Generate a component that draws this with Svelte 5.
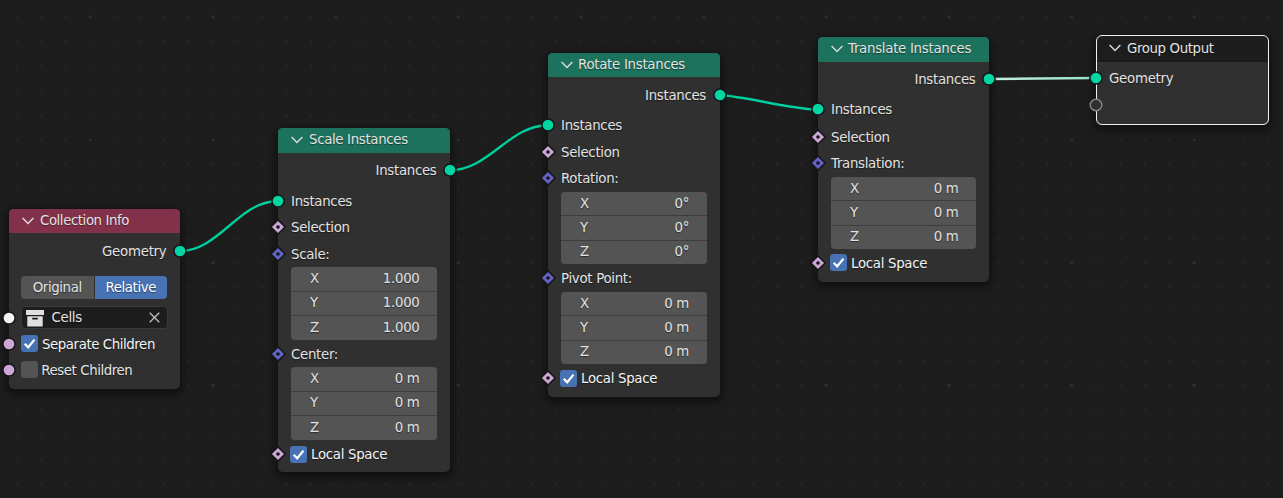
<script>
  const xyz = (a, b = a, c = a) => [['X', a], ['Y', b], ['Z', c]];

  const nodes = [
    {
      title: 'Collection Info', kind: 'input', x: 9, y: 209, w: 171, h: 180, head: 24, tx: 31, ts: -0.43,
      rows: [
        { type: 'out', text: 'Geometry', gap: 5, ls: -0.25 },
        { type: 'toggle', options: ['Original', 'Relative'], gap: 11.5 },
        { type: 'picker', text: 'Cells', gap: 6.5, socket: 'round white' },
        { type: 'check', text: 'Separate Children', on: true, gap: 1, socket: 'round pink', ls: -0.42 },
        { type: 'check', text: 'Reset Children', on: false, gap: 0, socket: 'round pink', ls: -0.42 }
      ]
    },
    {
      title: 'Scale Instances', kind: 'geo', x: 278, y: 128, w: 172, h: 344, head: 25, tx: 31, ts: -0.33,
      rows: [
        { type: 'out', text: 'Instances', gap: 4 },
        { type: 'in', text: 'Instances', gap: 5, socket: 'round green' },
        { type: 'in', text: 'Selection', gap: 0, socket: 'diamond pink' },
        { type: 'in', text: 'Scale:', gap: 1, socket: 'diamond blue' },
        { type: 'vec', values: xyz('1.000'), gap: 0, h: 72.5 },
        { type: 'in', text: 'Center:', gap: 1.5, socket: 'diamond blue' },
        { type: 'vec', values: xyz('0 m'), gap: 0, h: 72.5 },
        { type: 'check', text: 'Local Space', on: true, gap: 1.5, socket: 'diamond pink' }
      ]
    },
    {
      title: 'Rotate Instances', kind: 'geo', x: 548, y: 53, w: 171.5, h: 344, head: 24, tx: 30, ts: -0.28,
      rows: [
        { type: 'out', text: 'Instances', gap: 5 },
        { type: 'in', text: 'Instances', gap: 4, socket: 'round green' },
        { type: 'in', text: 'Selection', gap: 1, socket: 'diamond pink' },
        { type: 'in', text: 'Rotation:', gap: 0, socket: 'diamond blue' },
        { type: 'vec', values: xyz('0°'), gap: 1, h: 72 },
        { type: 'in', text: 'Pivot Point:', gap: 1, socket: 'diamond blue' },
        { type: 'vec', values: xyz('0 m'), gap: 1, h: 72 },
        { type: 'check', text: 'Local Space', on: true, gap: 1, socket: 'diamond pink' }
      ]
    },
    {
      title: 'Translate Instances', kind: 'geo', x: 818, y: 37, w: 171, h: 245, head: 24.5, tx: 30, ts: -0.28,
      rows: [
        { type: 'out', text: 'Instances', gap: 4.5 },
        { type: 'in', text: 'Instances', gap: 4, socket: 'round green' },
        { type: 'in', text: 'Selection', gap: 1.5, socket: 'diamond pink' },
        { type: 'in', text: 'Translation:', gap: 0.5, socket: 'diamond blue' },
        { type: 'vec', values: xyz('0 m'), gap: 1, h: 72 },
        { type: 'check', text: 'Local Space', on: true, gap: 0.8, socket: 'diamond pink' }
      ]
    },
    {
      title: 'Group Output', kind: 'output', x: 1096, y: 36, w: 172.5, h: 89, head: 25, tx: 31, ts: -0.38,
      rows: [
        { type: 'in', text: 'Geometry', gap: 4, socket: 'round green', ls: -0.25 },
        { type: 'in', text: '', gap: 1.3, socket: 'virtual' }
      ]
    }
  ];

  const minor = Array.from({ length: 53 }, (_, i) => i);
  const lines = Array.from({ length: 20 }, (_, i) => i);
</script>

{#snippet socket(kind)}
  {#if kind.startsWith('diamond')}
    <svg class="socket {kind}" viewBox="-8 -8 16 16">
      <path d="M0-7.1 7.1 0 0 7.1-7.1 0Z" />
      <circle r="1.8" />
    </svg>
  {:else}
    <svg class="socket {kind}" viewBox="-8 -8 16 16"><circle r={kind === 'virtual' ? 5.8 : 6.1} /></svg>
  {/if}
{/snippet}

<main class="canvas">
  <svg class="backdrop" viewBox="0 0 1283 498">
    {#each lines as j}
      {#each minor as i}
        {@const major = i % 5 === 3 && j % 5 === 0}
        <circle class:major cx={16.7 + i * 24.53} cy={17 + j * 24.57} r={major ? 1.7 : 1.3} />
      {/each}
    {/each}
  </svg>

  <svg class="links" viewBox="0 0 1283 498">
    <defs>
      <linearGradient id="active" gradientUnits="userSpaceOnUse" x1="989" y1="0" x2="1096" y2="0">
        <stop offset="0" stop-color="#c9f0e2" />
        <stop offset="1" stop-color="#93e2c9" />
      </linearGradient>
    </defs>
    <path d="M180 251C219 251 239 201 278 201" />
    <path d="M450 170.3C489 170.3 509 125.2 548 125.2" />
    <path d="M720 95C748 97 785 108 818 109.7" />
    <path class="active" d="M990 79L1096 78" />
  </svg>

  {#each nodes as node}
    <section class="node {node.kind}" style:left="{node.x}px" style:top="{node.y}px" style:width="{node.w}px" style:height="{node.h}px">
      <header style:height="{node.head}px" style:letter-spacing="{node.ts}px">
        <svg class="chevron" viewBox="0 0 12 8"><path d="M.6 1 6 6.6 11.4 1" /></svg>
        <span class="title" style:width="{node.w - node.tx}px">{node.title}</span>
      </header>
      {#each node.rows as row}
        <div class="row {row.type}" style:margin-top="{row.gap}px" style:height={row.h ? row.h + 'px' : null} style:letter-spacing={row.ls !== undefined ? row.ls + 'px' : null}>
          {#if row.socket}{@render socket(row.socket)}{/if}
          {#if row.type === 'toggle'}
            <button>{row.options[0]}</button><button class="selected">{row.options[1]}</button>
          {:else if row.type === 'picker'}
            <div class="field">
              <svg class="box" viewBox="0 0 18 17">
                <path d="M0 0H18V5H0Z" />
                <path fill-rule="evenodd" d="M1.3 6.3H16.7V16.5H1.3ZM6.2 7.7V9.5H11.8V7.7Z" />
              </svg>
              <span>{row.text}</span>
              <svg class="clear" viewBox="0 0 11 11"><path d="M.7.7 10.3 10.3M10.3.7.7 10.3" /></svg>
            </div>
          {:else if row.type === 'vec'}
            {#each row.values as [axis, value]}
              <div class="cell"><span>{axis}</span><span>{value}</span></div>
            {/each}
          {:else if row.type === 'check'}
            <span class="checkbox" class:on={row.on}>
              {#if row.on}<svg viewBox="0 0 17 17"><path d="M3.7 8.8 7.2 12.3 13.5 4.6" /></svg>{/if}
            </span>
            <span class="caption" class:lit={row.on}>{row.text}</span>
          {:else}
            <span class="label">{row.text}</span>
            {#if row.type === 'out'}{@render socket('round green right')}{/if}
          {/if}
        </div>
      {/each}
    </section>
  {/each}
</main>

<style>
  :global(body) { background: #1d1d1d; }
  .canvas {
    position: relative;
    width: 1283px;
    height: 498px;
    overflow: hidden;
    background: #1d1d1d;
    color: #e2e2e2;
    font: 13.33px/26px "DejaVu Sans", sans-serif;
    letter-spacing: -0.3px;
    white-space: nowrap;
  }
  .backdrop, .links { position: absolute; left: 0; top: 0; width: 1283px; height: 498px; }
  .backdrop circle { fill: #262626; }
  .backdrop .major { fill: #2e2e2e; }
  .links { filter: drop-shadow(0 0 0.7px #111); }
  .links path { fill: none; stroke: #00cf9e; stroke-width: 2.4; }
  .links .active { stroke: url(#active); stroke-width: 2.5; }

  .node {
    position: absolute;
    box-sizing: border-box;
    display: flex;
    flex-direction: column;
    border-radius: 5px;
    background: #303030;
    box-shadow: 0 0 0 0.5px #151515, 0 3px 9px 2px rgba(0, 0, 0, 0.5);
    text-shadow: 0 1px 1px rgba(0, 0, 0, 0.45);
  }
  header {
    flex: none;
    display: flex;
    align-items: center;
    justify-content: space-between;
    padding-left: 13px;
    border-radius: 4.5px 4.5px 0 0;
    background: #1d725e;
  }
  .input header { background: #83314a; }
  .output header { background: #1d1d1d; box-shadow: 0 1px #191919; }
  .output::after {
    content: "";
    position: absolute;
    inset: -1px -0.5px 0 -0.5px;
    border: 1.5px solid #f0f0f0;
    border-radius: 6px;
  }
  .title { line-height: 24px; margin-top: -1px; }
  .output .title { margin-top: 0; }
  .chevron { width: 12px; height: 8px; flex: none; margin-top: -1px; }
  .chevron path, .clear path { fill: none; stroke: #dcdcdc; stroke-width: 1.4; }
  .clear path { stroke: #c0c0c0; stroke-width: 1.3; }

  .row {
    position: relative;
    flex: none;
    display: flex;
    align-items: center;
    height: 26px;
    padding: 0 12.5px 0 13px;
  }
  .out { justify-content: flex-end; padding-right: 13.5px; }
  .label, .caption { margin-top: 2px; }
  .socket {
    position: absolute;
    z-index: 1;
    left: -8px;
    top: 5px;
    width: 16px;
    height: 16px;
  }
  .right { left: auto; right: -8px; }
  .socket circle, .socket path { stroke: #161616; stroke-width: 1.5; }
  .green { fill: #00d6a3; }
  .pink { fill: #cca6d6; }
  .blue { fill: #6363c7; }
  .white { fill: #f5f5f5; }
  .socket.diamond circle { fill: #141414; stroke: none; }
  .socket.virtual circle { fill: #303030; stroke: #8a8a8a; stroke-width: 1.4; }

  .toggle { height: 23.5px; padding: 0 13px 0 12px; gap: 1px; }
  button {
    flex: 1;
    height: 23.5px;
    padding: 0;
    border: 0;
    border-radius: 4px 0 0 4px;
    background: #545454;
    color: inherit;
    font: inherit;
    line-height: 23px;
    letter-spacing: -0.4px;
    text-shadow: inherit;
  }
  .selected { border-radius: 0 4px 4px 0; background: #4772b3; color: #fff; }
  .picker { height: 24px; padding: 0 12.5px 0 11.5px; }
  .picker .socket { top: 4px; }
  .input .socket:not(.right) { left: -8.5px; }
  .field {
    box-sizing: border-box;
    flex: 1;
    display: flex;
    align-items: center;
    height: 23px;
    padding: 0 7px 0 4.5px;
    border: 1px solid #3a3a3a;
    border-radius: 4px;
    background: #1d1d1d;
    line-height: 22px;
  }
  .box { width: 18px; height: 17px; margin-right: 7.5px; margin-top: 1px; fill: #e0e0e0; }
  .clear { width: 11px; height: 11px; margin-left: auto; }

  .vec {
    flex-direction: column;
    gap: 1px;
    margin: 0 13px 0 12.5px;
    padding: 0;
    border-radius: 4px;
    overflow: hidden;
    background: #3d3d3d;
  }
  .cell {
    box-sizing: border-box;
    flex: 1;
    display: flex;
    align-items: center;
    justify-content: space-between;
    width: 100%;
    padding: 0 17.5px 0 19.5px;
    background: #545454;
    line-height: 22px;
  }
  .check { padding-left: 12.5px; }
  .checkbox {
    width: 17px;
    height: 17px;
    margin-left: -0.5px;
    border-radius: 3px;
    background: #545454;
  }
  .on { background: #4772b3; }
  .checkbox svg { display: block; width: 17px; height: 17px; fill: none; stroke: #fff; stroke-width: 2.2; }
  .caption { margin-left: 3.3px; }
  .lit { margin-left: 4px; color: #f4f4f4; }
</style>
